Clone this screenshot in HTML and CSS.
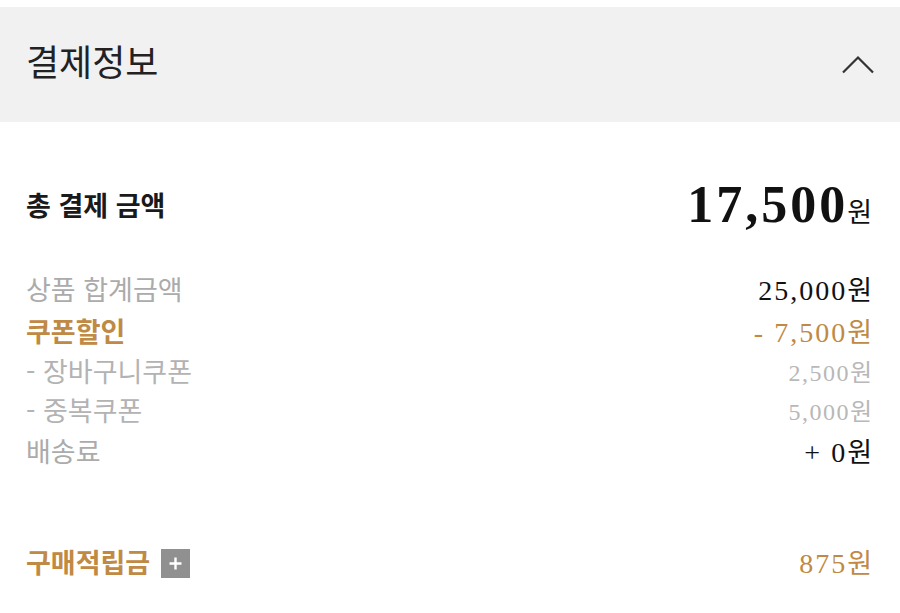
FILE: index.html
```html
<!DOCTYPE html>
<html lang="ko">
<head>
<meta charset="utf-8">
<title>결제정보</title>
<link rel="stylesheet" href="styles.css">
</head>
<body>
<div class="page">
  <header class="panel-head">
    <h1 class="panel-title">결제정보</h1>
    <svg class="chevron" width="34" height="20" viewBox="0 0 34 20" aria-hidden="true">
      <polyline points="2,17.5 17,2.5 32,17.5" fill="none" stroke="#333" stroke-width="2.2"/>
    </svg>
  </header>
  <section class="summary">
    <div class="total-row">
      <span class="total-label">총 결제 금액</span>
      <span class="total-value"><span class="num">17,500</span><span class="won">원</span></span>
    </div>
    <div class="details">
      <div class="row">
        <span class="label">상품 합계금액</span>
        <span class="value"><span class="num">25,000</span><span class="won">원</span></span>
      </div>
      <div class="row accent">
        <span class="label strong">쿠폰할인</span>
        <span class="value"><span class="num">- 7,500</span><span class="won">원</span></span>
      </div>
      <div class="row sub">
        <span class="label">- 장바구니쿠폰</span>
        <span class="value"><span class="num">2,500</span><span class="won">원</span></span>
      </div>
      <div class="row sub">
        <span class="label">- 중복쿠폰</span>
        <span class="value"><span class="num">5,000</span><span class="won">원</span></span>
      </div>
      <div class="row">
        <span class="label">배송료</span>
        <span class="value"><span class="num">+ 0</span><span class="won">원</span></span>
      </div>
    </div>
    <div class="row accent points">
      <span class="label strong">구매적립금<span class="plus-box"><svg width="15" height="15" viewBox="0 0 15 15" aria-hidden="true"><path d="M7.5 1.5v12M1.5 7.5h12" stroke="#fff" stroke-width="2.4" fill="none"/></svg></span></span>
      <span class="value"><span class="num">875</span><span class="won">원</span></span>
    </div>
  </section>
</div>
</body>
</html>
```

FILE: styles.css
```css
* { box-sizing: border-box; }
html, body { margin: 0; padding: 0; background: #fff; }
body {
  font-family: "Noto Sans CJK KR", "Noto Sans", sans-serif;
  color: #222;
}
.page { padding-top: 7px; width: 900px; }
.panel-head {
  height: 115px;
  background: #f1f1f1;
  display: flex;
  align-items: center;
  justify-content: space-between;
  padding: 0 25px 0 26px;
}
.panel-title {
  margin: 0;
  font-size: 36px;
  font-weight: 400;
  color: #222;
  line-height: 1;
  position: relative;
  top: -5px;
}
.chevron { display: block; margin-top: 0; }
.summary { padding: 0 28px 0 26px; }
.total-row {
  margin-top: 52px;
  height: 60px;
  display: flex;
  align-items: center;
  justify-content: space-between;
}
.total-label {
  font-size: 27px;
  font-weight: 600;
  color: #1a1a1a;
}
.total-value { display: flex; align-items: baseline; color: #111; }
.total-value .num {
  font-family: "Liberation Serif", "Times New Roman", serif;
  font-weight: 700;
  font-size: 52px;
  letter-spacing: 3px;
}
.total-value .won { font-size: 27px; margin-left: -1px; }
.details { margin-top: 33px; }
.row {
  height: 42px;
  display: flex;
  align-items: center;
  justify-content: space-between;
}
.row.sub { height: 39px; }
.label { font-size: 27px; color: #ababab; display: flex; align-items: center; }
.label.strong { font-weight: 600; }
.value { display: flex; align-items: baseline; color: #111; }
.value .num {
  font-family: "Liberation Serif", "Times New Roman", serif;
  font-size: 28px;
  letter-spacing: 2px;
}
.value .won { font-size: 27px; margin-left: 0; }
.row.sub .label { color: #b3b3b3; }
.row.sub .value { color: #b8b8b8; }
.row.sub .value .num { font-size: 24px; letter-spacing: 1.5px; }
.row.sub .value .won { font-size: 24px; }
.row.accent .label, .row.accent .value { color: #c08a44; }
.points { margin-top: 69px; }
.plus-box {
  display: inline-flex;
  align-items: center;
  justify-content: center;
  width: 29px;
  height: 29px;
  margin-left: 11px;
  background: #909090;
  position: relative;
  top: 2px;
}
.plus-box svg { display: block; }
```
